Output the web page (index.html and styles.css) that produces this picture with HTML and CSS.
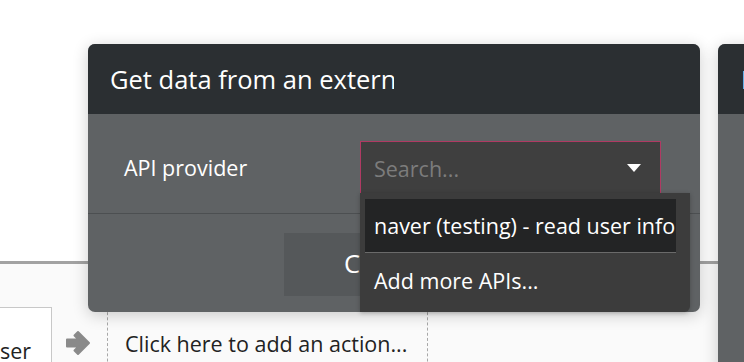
FILE: index.html
```
<!DOCTYPE html>
<html>
<head>
<meta charset="utf-8">
<link rel="stylesheet" href="styles.css">
</head>
<body>
<div class="canvas">
  <div class="top-area"></div>
  <div class="rule"></div>
  <div class="lane">
    <div class="event-box"><span class="event-text">ser</span></div>
    <div class="arrow">
      <svg width="26" height="26" viewBox="0 0 26 26"><path d="M2 9.5 H13.5 L9.5 5.5 L13 2 L24 13 L13 24 L9.5 20.5 L13.5 16.5 H2 Z" fill="#8a8a8a" stroke="#8a8a8a" stroke-width="2" stroke-linejoin="round"/></svg>
    </div>
    <div class="action-box">Click here to add an action...</div>
  </div>

  <div class="side-panel">
    <div class="side-header"><span class="side-title">E</span></div>
    <div class="side-body"></div>
  </div>

  <div class="popup">
    <div class="popup-header"><span class="popup-title">Get data from an external API</span></div>
    <div class="popup-body">
      <div class="field-row">
        <span class="field-label">API provider</span>
        <div class="search-box">
          <span class="search-placeholder">Search...</span>
          <span class="caret"></span>
        </div>
      </div>
      <div class="button-row">
        <div class="btn">Cancel</div>
      </div>
      <div class="dropdown">
        <div class="dd-item dd-active">naver (testing) - read user info</div>
        <div class="dd-item">Add more APIs...</div>
      </div>
    </div>
  </div>
</div>
</body>
</html>
```

FILE: styles.css
```
* { box-sizing: border-box; }
html, body { margin: 0; padding: 0; }
body {
  font-family: "Open Sans", "DejaVu Sans", sans-serif;
  background: #fafafa;
  width: 744px;
  height: 362px;
  overflow: hidden;
}
.canvas { position: relative; width: 744px; height: 362px; overflow: hidden; }
.top-area { height: 261px; background: #ffffff; }
.rule { height: 3px; background: #a2a2a2; }
.lane {
  display: flex;
  align-items: flex-start;
  padding-top: 43px;
  background: #fafafa;
}
.event-box {
  width: 52px;
  height: 70px;
  border-top: 1px solid #c8c8c8;
  border-right: 1px solid #c8c8c8;
  background: #ffffff;
  font-size: 21.5px;
  color: #222;
  line-height: 1;
  padding-top: 32px;
  overflow: hidden;
  white-space: nowrap;
}
.arrow {
  width: 26px;
  height: 26px;
  margin: 23px 0 0 13px;
}
.arrow svg { display: block; }
.action-box {
  margin-left: 16px;
  width: 321px;
  height: 70px;
  border-left: 1px dashed #a8a8a8;
  border-right: 1px dashed #a8a8a8;
  font-size: 21.5px;
  color: #222;
  padding: 23px 0 0 17px;
  line-height: 28px;
  white-space: nowrap;
  overflow: hidden;
}

.popup {
  position: absolute;
  left: 88px;
  top: 44px;
  width: 612px;
  height: 268px;
  border-radius: 7px;
  background: #5f6264;
  box-shadow: 0 3px 16px rgba(0,0,0,0.2);
}
.popup-header {
  height: 70px;
  background: #2b2f32;
  border-radius: 7px 7px 0 0;
  padding: 18px 0 0 22px;
}
.popup-title {
  display: block;
  width: 284px;
  overflow: hidden;
  white-space: nowrap;
  color: #fff;
  font-size: 25.5px;
  line-height: 34px;
}
.popup-body { position: relative; }
.field-row {
  display: flex;
  align-items: center;
  height: 100px;
  padding: 27px 0 19px 36px;
  border-bottom: 1px solid #4c4f51;
}
.field-label {
  width: 236px;
  color: #fff;
  font-size: 21.5px;
  line-height: 28px;
  margin-top: 1px;
}
.search-box {
  width: 301px;
  height: 54px;
  background: #3f3f3f;
  border: 1px solid #b03a63;
  display: flex;
  align-items: center;
  justify-content: space-between;
  padding: 2px 19px 0 13px;
}
.search-placeholder { color: #7c7c7c; font-size: 21.5px; }
.caret {
  width: 0; height: 0;
  border-left: 7px solid transparent;
  border-right: 7px solid transparent;
  border-top: 8px solid #fff;
  margin-top: -1px;
}
.button-row { padding: 19px 0 0 196px; }
.btn {
  width: 220px;
  height: 63px;
  background: #55585a;
  color: #fff;
  font-size: 25.5px;
  padding: 13px 0 0 60px;
  line-height: 34px;
  white-space: nowrap;
  overflow: hidden;
}
.dropdown {
  position: absolute;
  left: 272px;
  top: 79px;
  width: 330px;
  height: 119px;
  background: #3c3c3c;
  padding: 6px 14px 0 5px;
  box-shadow: 0 1px 4px rgba(0,0,0,0.25);
  border-radius: 0 0 6px 0;
}
.dd-item {
  height: 54px;
  display: flex;
  align-items: center;
  padding-left: 9px;
  color: #fff;
  font-size: 21.5px;
  white-space: nowrap;
  overflow: hidden;
}
.dd-active { background: #232425; border-bottom: 1px solid #6a6a6a; }

.side-panel {
  position: absolute;
  left: 718px;
  top: 44px;
  width: 80px;
  height: 330px;
  border-radius: 7px;
  background: #5f6264;
  overflow: hidden;
  box-shadow: 0 3px 16px rgba(0,0,0,0.2);
}
.side-header { height: 70px; background: #2b2f32; padding: 18px 0 0 23px; }
.side-title { color: #fff; font-size: 25.5px; line-height: 34px; }
```
